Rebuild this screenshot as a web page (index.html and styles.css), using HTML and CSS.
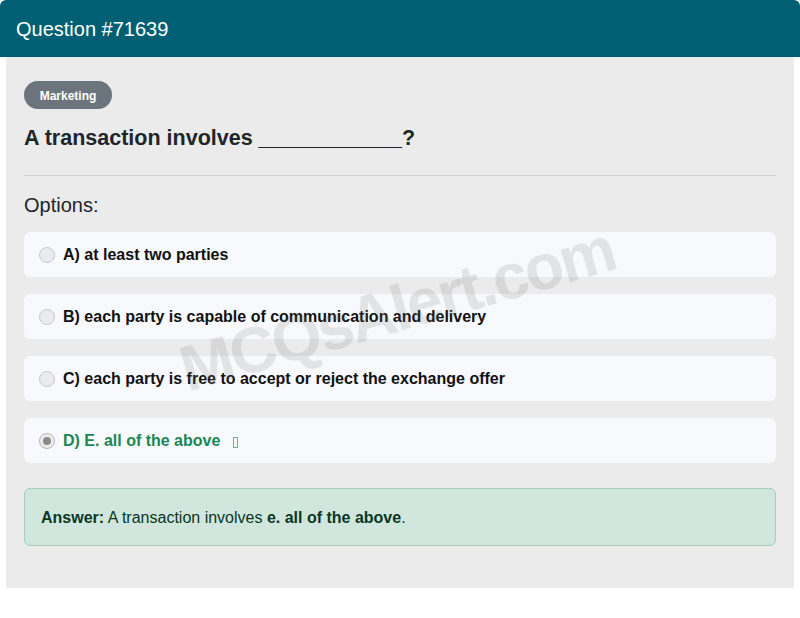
FILE: index.html
```html
<!DOCTYPE html>
<html>
<head>
<meta charset="utf-8">
<link rel="stylesheet" href="styles.css">
</head>
<body>
<div class="card">
  <div class="card-header">Question #71639</div>
  <div class="card-body">
    <span class="badge">Marketing</span>
    <h1 class="question">A transaction involves ____________?</h1>
    <hr class="divider">
    <h2 class="options-title">Options:</h2>
    <div class="options">
      <label class="option"><span class="radio"></span><span class="opt-text">A) at least two parties</span></label>
      <label class="option"><span class="radio"></span><span class="opt-text">B) each party is capable of communication and delivery</span></label>
      <label class="option"><span class="radio"></span><span class="opt-text">C) each party is free to accept or reject the exchange offer</span></label>
      <label class="option correct"><span class="radio checked"></span><span class="opt-text">D) E. all of the above</span><span class="tofu"></span></label>
    </div>
    <div class="answer"><b>Answer:</b> A transaction involves <b>e. all of the above</b>.</div>
    <div class="watermark">MCQsAlert.com</div>
  </div>
</div>
</body>
</html>
```
FILE: styles.css
```css
* { box-sizing: border-box; }
html, body { margin: 0; padding: 0; background: #ffffff; }
body { font-family: "Liberation Sans", Arial, sans-serif; color: #212529; }

.card { width: 800px; }
.card-header {
  height: 57px;
  background: #005f73;
  color: #ffffff;
  font-size: 20px;
  padding: 2px 16px 0;
  display: flex;
  align-items: center;
  border-radius: 6px 6px 0 0;
}
.card-body {
  position: relative;
  overflow: hidden;
  margin: 0 6px;
  background: #ebebeb;
  padding: 24px 18px 42px;
  height: 531px;
}
.badge {
  display: inline-flex;
  align-items: center;
  justify-content: center;
  width: 88px;
  height: 28px;
  padding-top: 2px;
  border-radius: 14px;
  background: #6c757d;
  color: #ffffff;
  font-size: 12px;
  font-weight: bold;
}
.question {
  margin: 16px 0 0;
  font-size: 21.5px;
  font-weight: bold;
  line-height: 27px;
  color: #212529;
}
.divider {
  margin: 23px 0 0;
  border: 0;
  border-top: 1px solid #cfcfcf;
}
.options-title {
  margin: 17px 0 0;
  font-size: 20px;
  font-weight: normal;
  line-height: 24px;
}
.options {
  margin-top: 15px;
  display: flex;
  flex-direction: column;
  gap: 17px;
}
.option {
  display: flex;
  align-items: center;
  height: 45px;
  padding: 0 15px;
  background: #f8f9fc;
  border-radius: 6px;
  font-size: 16px;
  font-weight: bold;
  color: #111111;
}
.radio {
  width: 16px;
  height: 16px;
  border-radius: 50%;
  border: 1px solid #c6c8ca;
  background: #eaebed;
  margin-right: 8px;
  flex: none;
  display: flex;
  align-items: center;
  justify-content: center;
}
.radio.checked { background: #ececec; border-color: #b5b5b5; }
.radio.checked::after {
  content: "";
  width: 8px;
  height: 8px;
  border-radius: 50%;
  background: #8a8a8a;
}
.correct .opt-text { color: #198754; }
.tofu {
  display: inline-block;
  width: 5px;
  height: 11px;
  border: 1px solid #6fb08f;
  margin-left: 13px;
  margin-top: 4px;
}
.answer {
  margin-top: 25px;
  height: 58px;
  padding: 19px 16px 0;
  line-height: 20px;
  background: #d1e7dd;
  border: 1px solid #a3cfbb;
  border-radius: 6px;
  font-size: 16px;
  color: #0a3622;
}
.watermark {
  position: absolute;
  left: 166px;
  top: 217px;
  width: 450px;
  text-align: center;
  font-size: 64px;
  letter-spacing: -2.5px;
  line-height: 71px;
  font-weight: bold;
  color: rgba(120, 120, 120, 0.17);
  transform: rotate(-16deg);
  transform-origin: center;
  pointer-events: none;
  white-space: nowrap;
}
```
